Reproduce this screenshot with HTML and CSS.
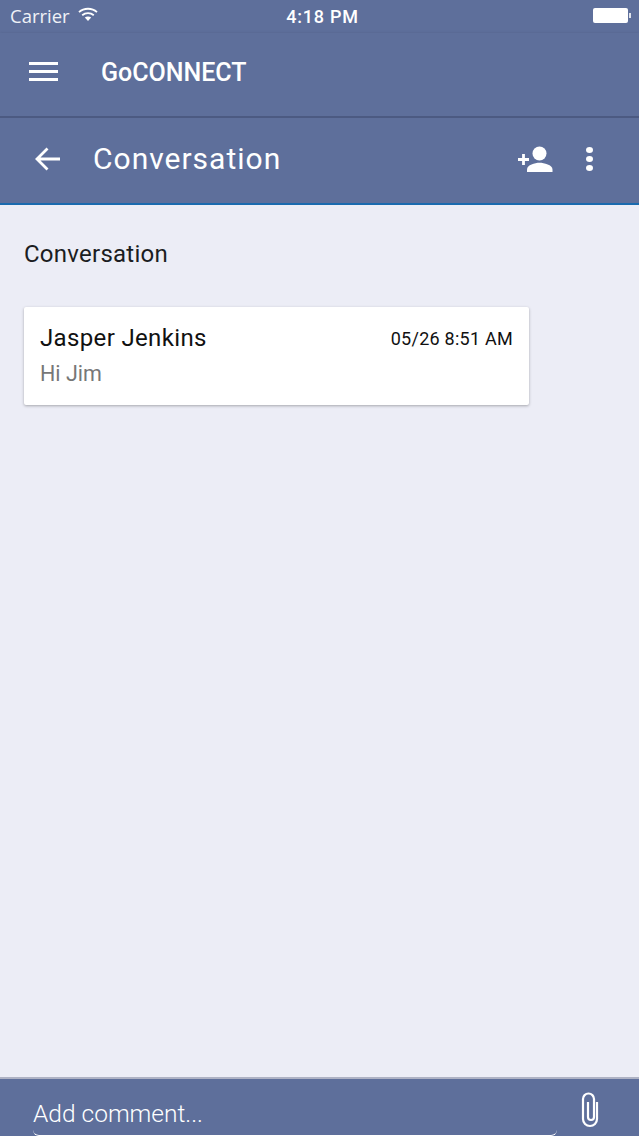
FILE: index.html
```html
<!DOCTYPE html>
<html lang="en">
<head>
    <meta charset="UTF-8">
    <meta name="viewport" content="width=device-width, initial-scale=1.0">
    <title>GoCONNECT</title>
    <link rel="stylesheet" href="styles.css">
</head>
<body>
    <div class="app">
        <div class="status-bar">
            <div class="status-left">
                <span>Carrier</span>
                <svg class="wifi" width="20" height="15" viewBox="0 0 20 15">
                    <path d="M1 5.2C6 .6 14 .6 19 5.2" fill="none" stroke="#fff" stroke-width="1.8"/>
                    <path d="M4.2 8.2c3.3-2.8 8.3-2.8 11.6 0" fill="none" stroke="#fff" stroke-width="1.8"/>
                    <path d="M6.8 10.6c1.9-1.4 4.5-1.4 6.4 0L10 14z" fill="#fff"/>
                </svg>
            </div>
            <span class="status-time">4:18 PM</span>
            <div class="battery">
                <div class="battery-body"></div>
                <div class="battery-tip"></div>
            </div>
        </div>

        <div class="app-bar">
            <div class="menu-icon">
                <span></span>
                <span></span>
                <span></span>
            </div>
            <h1 class="app-title">GoCONNECT</h1>
        </div>

        <div class="sub-bar">
            <svg class="back-icon" width="28" height="26" viewBox="0 0 28 26">
                <path d="M26 13H3M13.5 2.5L3 13l10.5 10.5" fill="none" stroke="#fff" stroke-width="2.8"/>
            </svg>
            <h2 class="sub-title">Conversation</h2>
            <svg class="add-person" width="36" height="28" viewBox="0 0 36 28">
                <circle cx="22.5" cy="8.5" r="7" fill="#fff"/>
                <path d="M10 27v-2.5c0-4.6 8-6.7 12.5-6.7s13 2.1 13 6.7V27z" fill="#fff"/>
                <path d="M1 14.5h11M6.5 9v11" fill="none" stroke="#fff" stroke-width="2.8"/>
            </svg>
            <div class="more-icon">
                <span></span>
                <span></span>
                <span></span>
            </div>
        </div>

        <div class="content">
            <h3 class="section-title">Conversation</h3>
            <div class="message-card">
                <div class="card-top">
                    <span class="card-name">Jasper Jenkins</span>
                    <span class="card-date">05/26 8:51 AM</span>
                </div>
                <p class="card-text">Hi Jim</p>
            </div>
        </div>

        <div class="comment-bar">
            <div class="comment-input">Add comment...</div>
            <svg class="clip-icon" width="20" height="36" viewBox="0 0 20 36">
                <path d="M17 10V27a7 7 0 0 1-14 0V7a5.5 5.5 0 0 1 11 0V25a3 3 0 0 1-6 0V10" fill="none" stroke="#fff" stroke-width="2.2"/>
            </svg>
        </div>
    </div>
</body>
</html>
```

FILE: styles.css
```css
* {
    margin: 0;
    padding: 0;
    box-sizing: border-box;
}

html, body {
    height: 100%;
}

body {
    font-family: Roboto, "Liberation Sans", sans-serif;
    background: #ecedf6;
    overflow: hidden;
}

.app {
    width: 639px;
    height: 1136px;
    display: flex;
    flex-direction: column;
}

.status-bar {
    height: 33px;
    background: #5e6f9b;
    color: #fff;
    display: flex;
    align-items: center;
    justify-content: space-between;
    padding: 0 8px 0 10px;
    font-size: 18px;
}

.status-left {
    display: flex;
    align-items: center;
    gap: 8px;
    width: 124px;
    margin-top: -2px;
    font-family: "Open Sans", "Liberation Sans", sans-serif;
    font-size: 18.5px;
    color: #f0f2f7;
}

.wifi {
    margin-top: -2px;
}

.status-time {
    font-weight: 500;
    font-size: 18px;
    letter-spacing: 0.8px;
}

.battery {
    display: flex;
    align-items: center;
    width: 120px;
    justify-content: flex-end;
    margin-top: -2px;
}

.battery-body {
    width: 35px;
    height: 15px;
    background: #fff;
    border-radius: 2px;
}

.battery-tip {
    width: 2px;
    height: 5px;
    margin-left: 1px;
    background: #dfe3ec;
}

.app-bar {
    height: 85px;
    background: #5e6f9b;
    border-bottom: 2px solid #4c5a82;
    box-shadow: 0 1px 3px rgba(60,70,105,0.6);
    display: flex;
    align-items: center;
    padding: 0 0 6px 29px;
}

.menu-icon {
    width: 29px;
    display: flex;
    flex-direction: column;
    gap: 5px;
}

.menu-icon span {
    height: 3px;
    background: #fff;
}

.app-title {
    margin-left: 43px;
    margin-top: 2px;
    font-size: 25px;
    font-weight: 500;
    color: #fff;
}

.sub-bar {
    height: 87px;
    background: #5e6f9b;
    border-bottom: 2px solid #1a6aae;
    display: flex;
    align-items: center;
    padding: 0 46px 4px 34px;
}

.back-icon {
    flex: none;
}

.sub-title {
    margin-left: 31px;
    flex: 1;
    font-size: 30px;
    font-weight: 400;
    letter-spacing: 1px;
    color: #fff;
}

.add-person {
    flex: none;
    margin-right: 33px;
}

.more-icon {
    display: flex;
    flex-direction: column;
    gap: 3px;
}

.more-icon span {
    width: 7px;
    height: 6px;
    border-radius: 50%;
    background: #fff;
}

.content {
    flex: 1;
    padding: 0 110px 0 24px;
    background: #ecedf6;
}

.section-title {
    margin-top: 35px;
    font-size: 24px;
    line-height: 28px;
    font-weight: 400;
    letter-spacing: 0.25px;
    color: #1b1d22;
}

.message-card {
    margin-top: 39px;
    height: 98px;
    width: 505px;
    padding: 16px 16px 0;
    background: #fff;
    border-radius: 2px;
    box-shadow: 0 1px 3px rgba(0,0,0,0.3);
}

.card-top {
    display: flex;
    justify-content: space-between;
    align-items: center;
}

.card-name {
    font-size: 24px;
    line-height: 30px;
    letter-spacing: 0.35px;
    color: #111;
}

.card-date {
    font-size: 18px;
    letter-spacing: 0.25px;
    color: #111;
}

.card-text {
    margin-top: 9px;
    font-size: 21.5px;
    line-height: 24px;
    color: #777;
}

.comment-bar {
    height: 59px;
    background: #5e6f9b;
    border-top: 2px solid #aeb2c4;
    display: flex;
    align-items: flex-end;
    padding: 0 39px 0 33px;
    justify-content: space-between;
}

.comment-input {
    width: 524px;
    height: 41px;
    border-bottom: 1px solid #fff;
    border-radius: 0 0 6px 6px;
    font-size: 24.5px;
    font-weight: 300;
    line-height: 38px;
    color: #fff;
}

.clip-icon {
    margin-bottom: 8px;
}
```
